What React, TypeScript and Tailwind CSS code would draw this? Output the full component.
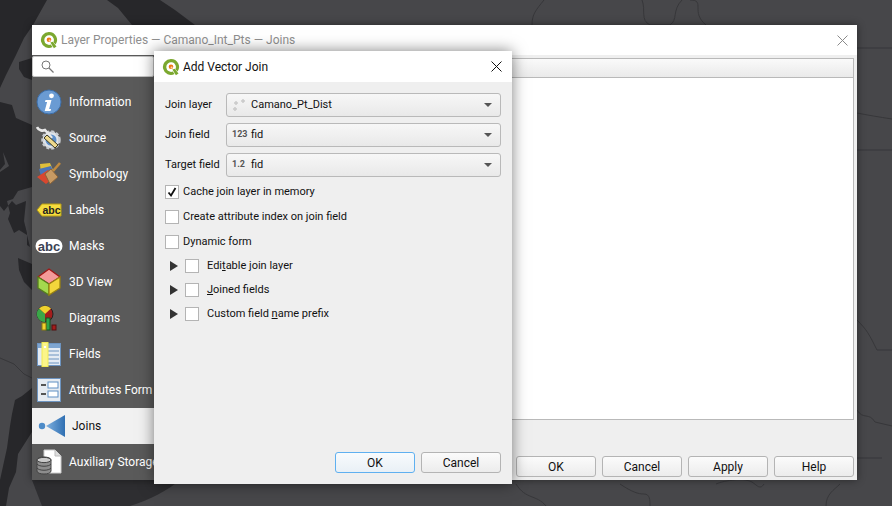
import React from 'react';

const FONT = { fontFamily: 'Roboto, "Liberation Sans", sans-serif' };

const QgisLogo = () => (
  <svg width="18" height="18" viewBox="0 0 18 18" className="shrink-0">
    <path d="M9 1a8 8 0 1 0 3.6 15.1l-1.9-2.5a4.8 4.8 0 1 1 2.7-2.4l2.2 2.4A8 8 0 0 0 9 1z" fill="#7ba82f" />
    <path d="M10.4 11.4l2.4-.6 3.7 4.6-2.6 1.8z" fill="#7ba82f" />
    <circle cx="9" cy="8.8" r="2.3" fill="#ee7913" />
    <circle cx="9.6" cy="9.4" r="1" fill="#f6d5a8" />
  </svg>
);

const InfoIcon = () => (
  <svg width="26" height="26" viewBox="0 0 26 26">
    <circle cx="13" cy="13" r="12" fill="#6a9bd3" stroke="#3d6ea8" />
    <circle cx="15.5" cy="6.8" r="2.4" fill="#fff" />
    <path d="M9.5 11h6l-2.4 9h2l-.6 2H8.7l2.4-9H9z" fill="#fff" />
  </svg>
);

const SourceIcon = () => (
  <svg width="26" height="28" viewBox="0 0 26 28">
    <circle cx="15" cy="16" r="8.5" fill="#dfe3e8" stroke="#c8ccd0" strokeWidth="2.5" strokeDasharray="3 2" />
    <circle cx="15" cy="16" r="5.5" fill="#5c8fca" />
    <path d="M1 3c2 4 6 4 8 3l7 8" stroke="#e8e8e8" strokeWidth="2.6" fill="none" />
    <path d="M11 11l11 10-3 3-11-10z" fill="#eed98c" stroke="#3d3a22" />
  </svg>
);

const SymbologyIcon = () => (
  <svg width="26" height="26" viewBox="0 0 26 26">
    <path d="M4 3l10-1 3 7-12 5z" fill="#dfbe3a" />
    <path d="M3 8l12-3 2 5-12 5z" fill="#4a74b8" />
    <path d="M1 16l11-7 5 8-7 6z" fill="#d9472f" />
    <path d="M9 13l6-5 7 8-8 7z" fill="#c89a63" stroke="#8a6338" />
    <path d="M17 10l7-8" stroke="#c08a3e" strokeWidth="2.6" />
  </svg>
);

const LabelsIcon = () => (
  <svg width="26" height="14" viewBox="0 0 26 14">
    <path d="M1 7l5-6h19v12H6z" fill="#f5dc3e" stroke="#b79d14" />
    <text x="15.5" y="11" textAnchor="middle" fontSize="10.5" fontWeight="700" fill="#222" fontFamily="Liberation Sans">abc</text>
  </svg>
);

const MasksIcon = () => (
  <svg width="28" height="16" viewBox="0 0 28 16">
    <rect x="0.5" y="1" width="27" height="14" rx="7" fill="#fff" />
    <text x="14" y="13" textAnchor="middle" fontSize="13" fontWeight="700" fill="#3b4354" fontFamily="Liberation Sans">abc</text>
  </svg>
);

const CubeIcon = () => (
  <svg width="26" height="28" viewBox="0 0 26 28">
    <path d="M13 1l11 8-11 7L2 9z" fill="#f59a9a" stroke="#a01818" strokeWidth="1.3" />
    <path d="M2 9l11 7v11L2 20z" fill="#a4d84e" stroke="#55801c" strokeWidth="1.3" />
    <path d="M24 9l-11 7v11l11-7z" fill="#f3d63c" stroke="#9a8312" strokeWidth="1.3" />
  </svg>
);

const DiagramsIcon = () => (
  <svg width="26" height="26" viewBox="0 0 26 26">
    <circle cx="9" cy="9" r="8" fill="#a41c1c" stroke="#222" />
    <path d="M9 9L3 3.5A8 8 0 0 1 15 3.5z" fill="#f0d22e" />
    <path d="M9 9L3 3.5A8 8 0 0 0 9 17z" fill="#3aa648" />
    <rect x="10" y="13" width="4" height="12" fill="#2ea44a" stroke="#14521f" />
    <rect x="6" y="18" width="4" height="7" fill="#f0d22e" stroke="#8a7a10" />
    <rect x="16" y="20" width="4" height="5" fill="#a41c1c" stroke="#521010" />
  </svg>
);

const FieldsIcon = () => (
  <svg width="24" height="25" viewBox="0 0 24 25">
    <rect x="0.5" y="1.5" width="23" height="22" fill="#e4ebf3" stroke="#6d94c0" />
    <rect x="1" y="2" width="22" height="4" fill="#7ea5d0" />
    <path d="M9 9h13M9 13h13M9 17h13M9 21h13" stroke="#6d94c0" />
    <rect x="5" y="0.5" width="6" height="24" fill="#fbf58a" stroke="#f2ea55" />
    <rect x="7" y="4" width="2" height="2" fill="#fff" />
  </svg>
);

const AttrFormIcon = () => (
  <svg width="24" height="24" viewBox="0 0 24 24">
    <rect x="0.5" y="0.5" width="23" height="23" fill="#e6ebf1" stroke="#6d94c0" />
    <rect x="4" y="6" width="5" height="2" fill="#555" />
    <rect x="4" y="15" width="5" height="2" fill="#555" />
    <rect x="11" y="4" width="10" height="6" fill="#fff" stroke="#5f8fc4" />
    <rect x="11" y="13" width="10" height="6" fill="#fff" stroke="#5f8fc4" />
  </svg>
);

const JoinsIcon = () => (
  <svg width="28" height="24" viewBox="0 0 28 24">
    <defs>
      <linearGradient id="joinFill" x1="0" y1="0" x2="1" y2="0">
        <stop offset="0" stopColor="#7fb0df" />
        <stop offset="1" stopColor="#2f6fb2" />
      </linearGradient>
    </defs>
    <circle cx="4" cy="12" r="3.2" fill="#4d8bc8" />
    <path d="M8 12L27 1v22z" fill="url(#joinFill)" />
  </svg>
);

const AuxIcon = () => (
  <svg width="26" height="26" viewBox="0 0 26 26">
    <path d="M8 1h11l6 6v17H8z" fill="#fff" stroke="#ccc" />
    <path d="M19 1v6h6" fill="#ddd" stroke="#bbb" />
    <path d="M1 11c0-4 14-4 14 0v11c0 4-14 4-14 0z" fill="#8d8d8d" stroke="#444" />
    <ellipse cx="8" cy="11" rx="7" ry="2.6" fill="#c9c9c9" stroke="#444" />
    <path d="M1 15c2 3 12 3 14 0M1 19c2 3 12 3 14 0" stroke="#444" fill="none" />
  </svg>
);

const navItems = [
  { label: 'Information', icon: <InfoIcon /> },
  { label: 'Source', icon: <SourceIcon /> },
  { label: 'Symbology', icon: <SymbologyIcon /> },
  { label: 'Labels', icon: <LabelsIcon /> },
  { label: 'Masks', icon: <MasksIcon /> },
  { label: '3D View', icon: <CubeIcon /> },
  { label: 'Diagrams', icon: <DiagramsIcon /> },
  { label: 'Fields', icon: <FieldsIcon /> },
  { label: 'Attributes Form', icon: <AttrFormIcon /> },
  { label: 'Joins', icon: <JoinsIcon />, active: true },
  { label: 'Auxiliary Storage', icon: <AuxIcon /> },
];

const Button = ({ label, primary }: { label: string; primary?: boolean }) => (
  <div
    className={`w-20 h-[21px] flex items-center justify-center rounded-[3px] border text-[12px] text-[#111] bg-gradient-to-b ${
      primary ? 'border-[#5fb0f0] from-[#f8fbfd] to-[#e9f0f6]' : 'border-[#b4b4b4] from-[#fbfbfb] to-[#ececec]'
    }`}
  >
    {label}
  </div>
);

const Combo = ({ icon, text }: { icon: React.ReactNode; text: string }) => (
  <div className="w-[275px] h-6 flex items-center rounded-[3px] border border-[#b9b9b9] bg-gradient-to-b from-[#f7f7f7] to-[#e9e9e9] pl-[5px] pr-[8px] text-[11px] text-[#111]">
    <span className="w-[19px] shrink-0 flex items-center">{icon}</span>
    <span className="flex-1 pt-[1px]">{text}</span>
    <span className="w-0 h-0 border-x-[4px] border-x-transparent border-t-[4px] border-t-[#555]" />
  </div>
);

const FieldRow = ({ label, icon, text }: { label: string; icon: React.ReactNode; text: string }) => (
  <div className="flex items-center justify-between">
    <span className="text-[11px] text-[#111] whitespace-nowrap pt-[1px]">{label}</span>
    <Combo icon={icon} text={text} />
  </div>
);

const Check = ({ checked }: { checked?: boolean }) => (
  <span className="w-[14px] h-[14px] shrink-0 border border-[#b4b4b4] bg-white flex items-center justify-center">
    {checked && (
      <svg width="10" height="10" viewBox="0 0 10 10">
        <path d="M1.5 5.5L4 8.5 8.5 1" stroke="#111" strokeWidth="1.8" fill="none" />
      </svg>
    )}
  </span>
);

const CheckRow = ({ label, checked }: { label: string; checked?: boolean }) => (
  <div className="flex items-center gap-[4px] text-[11px] text-[#111] h-4">
    <Check checked={checked} />
    <span className="pt-[1px]">{label}</span>
  </div>
);

const GroupRow = ({ label }: { label: React.ReactNode }) => (
  <div className="flex items-center text-[11px] text-[#111] h-4 pl-[5px]">
    <span className="w-0 h-0 border-y-[5px] border-y-transparent border-l-[8px] border-l-[#333] mr-[7px]" />
    <Check />
    <span className="ml-[8px] pt-[1px]">{label}</span>
  </div>
);

const MapBackground = () => (
  <svg className="absolute inset-0" width="892" height="506" viewBox="0 0 892 506">
    <rect width="892" height="506" fill="#47474a" />
    {/* water, left edge and top */}
    <path d="M0 0h47L33 25 24 38 16 55 6 75 0 88z" fill="#27272a" />
    <path d="M107 0h53l15 10 20 15h-63L118 8z" fill="#27272a" />
    <path d="M19 62l13-4v22l-8-3-5-8z" fill="#27272a" />
    <path d="M0 102l12 3 4 13 16 7v62l-14 4-5 8-6 2 3 12-2 6 6 14 5-3 8 5 3 12-3-2v-12l-3-12 2-20-10 4-4-4-8 10-4-5z" fill="#27272a" />
    <path d="M0 170l5-6-2-12 6 14-9 6z" fill="#47474a" />
    <path d="M18 258l14 6v26l-8-8-5-12z" fill="#27272a" />
    <path d="M32 388l-10 8-7 4-3 14-2 12-3 22-7 32v26h6l3-18 7-16 2-18 14-22z" fill="#27272a" />
    <path d="M32 480h148c-12 10-30 20-50 26H42z" fill="#2e2e31" />
    {/* boundary lines */}
    <path d="M544 0c-8 10-12 14-12 25M642 0c4 10-2 20 8 25h20c8-5 2-15 12-25M690 0c16 0 0 12 16 25M857 48h35M857 113c10 2 22 4 35 6M857 150h35M857 320c10 10 12 14 20 30h15M857 410c6 10 12 2 18 12l17 4M857 458h25M516 484c10 16 20 10 30 22M620 484c12 8 18 10 24 10s6 6 6 12M716 484c8-4 30-6 36-2s8 8 12 2M840 484c-6 6-14 10-14 22M0 358l14 6 10 10 8 4"
      stroke="#37373a" strokeWidth="1" fill="none" />
  </svg>
);

export default function App() {
  return (
    <div className="relative w-[892px] h-[506px] overflow-hidden" style={FONT}>
      <MapBackground />

      {/* Layer Properties window */}
      <div className="absolute left-[32px] top-[25px] w-[825px] h-[455px] flex flex-col bg-[#efefef] shadow-[0_0_8px_rgba(0,0,0,0.45)]">
        <div className="h-[30px] bg-white flex items-center pl-[8px] gap-[3px] text-[12px] text-[#8f8f8f]">
          <QgisLogo />
          <span>Layer Properties — Camano_Int_Pts — Joins</span>
          <svg className="ml-auto mr-[9px]" width="11" height="11" viewBox="0 0 11 11">
            <path d="M.5.5l10 10M10.5.5l-10 10" stroke="#8a8a8a" />
          </svg>
        </div>
        <div className="flex-1 flex min-h-0">
          <div className="w-[122px] bg-[#5a5a5a] flex flex-col">
            <div className="h-[22px] mt-[1px] bg-white border border-[#c4c4c4] rounded-[2px] flex items-center pl-[8px]">
              <svg width="13" height="13" viewBox="0 0 13 13">
                <circle cx="5" cy="5" r="4" stroke="#777" fill="none" />
                <path d="M8 8l4.5 4.5" stroke="#777" strokeWidth="1.3" />
              </svg>
            </div>
            <div className="mt-[7px] flex flex-col">
              {navItems.map((it) => (
                <div
                  key={it.label}
                  className={`h-[36px] flex items-center whitespace-nowrap text-[12px] ${
                    it.active ? 'bg-[#f1f1f1] text-[#111] pl-[6px]' : 'text-white pl-[3px]'
                  }`}
                >
                  <span className="w-[28px] h-[28px] flex items-center justify-center shrink-0">{it.icon}</span>
                  <span className={it.active ? 'ml-[6px]' : 'ml-[6px]'}>{it.label}</span>
                </div>
              ))}
            </div>
          </div>
          <div className="flex-1 flex flex-col pt-[3px] pr-[3px] pl-[2px] pb-[3px]">
            <div className="flex-1 flex flex-col border border-[#b9b9b9] bg-white">
              <div className="h-[19px] bg-gradient-to-b from-[#fafafa] to-[#eaeaea] border-b border-[#b9b9b9]" />
            </div>
            <div className="h-[57px] flex items-start justify-end gap-[6px] pt-[36px]">
              <Button label="OK" />
              <Button label="Cancel" />
              <Button label="Apply" />
              <Button label="Help" />
            </div>
          </div>
        </div>
      </div>

      {/* Add Vector Join dialog */}
      <div className="absolute left-[154px] top-[51px] w-[358px] h-[433px] flex flex-col bg-[#efefef] shadow-[0_0_14px_rgba(0,0,0,0.5)]">
        <div className="h-[31px] bg-white flex items-center pl-[8px] gap-[3px] text-[12px] text-[#111]">
          <QgisLogo />
          <span>Add Vector Join</span>
          <svg className="ml-auto mr-[10px]" width="11" height="11" viewBox="0 0 11 11">
            <path d="M.5.5l10 10M10.5.5l-10 10" stroke="#111" />
          </svg>
        </div>
        <div className="flex-1 flex flex-col pt-[11px] pl-[11px] pr-[11px] pb-[11px]">
          <div className="flex flex-col gap-[6px]">
            <FieldRow
              label="Join layer"
              text="Camano_Pt_Dist"
              icon={
                <svg width="14" height="14" viewBox="0 0 14 14">
                  <circle cx="3" cy="11" r="1.2" fill="#fff" stroke="#999" strokeWidth=".7" />
                  <circle cx="4" cy="5" r="1.2" fill="#fff" stroke="#999" strokeWidth=".7" />
                  <circle cx="11" cy="3" r="1.2" fill="#fff" stroke="#999" strokeWidth=".7" />
                </svg>
              }
            />
            <FieldRow label="Join field" text="fid" icon={<span className="text-[9px] font-bold text-[#555]">123</span>} />
            <FieldRow label="Target field" text="fid" icon={<span className="text-[9px] font-bold text-[#555]">1.2</span>} />
          </div>
          <div className="mt-[7px] flex flex-col gap-[9px]">
            <CheckRow label="Cache join layer in memory" checked />
            <CheckRow label="Create attribute index on join field" />
            <CheckRow label="Dynamic form" />
          </div>
          <div className="mt-[8px] flex flex-col gap-[8px]">
            <GroupRow label={<>Edi<u>t</u>able join layer</>} />
            <GroupRow label={<><u>J</u>oined fields</>} />
            <GroupRow label={<>Custom field <u>n</u>ame prefix</>} />
          </div>
          <div className="mt-auto flex justify-end gap-[6px]">
            <Button label="OK" primary />
            <Button label="Cancel" />
          </div>
        </div>
      </div>
    </div>
  );
}
